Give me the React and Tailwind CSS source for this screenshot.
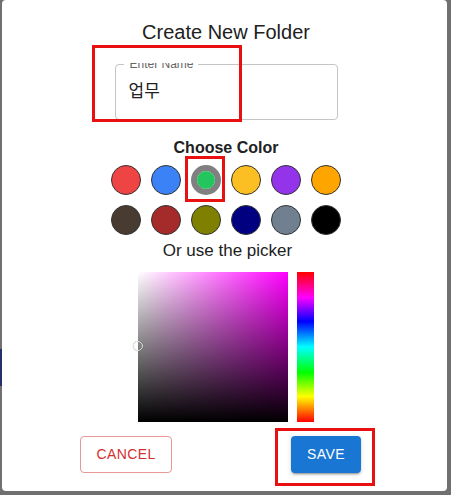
// App.jsx — "Create New Folder" dialog with colour swatches and picker

import React from 'react';

const SWATCHES = [
  '#ef4444', '#3b82f6', '#22c55e', '#fbbf24', '#9333ea', '#ffa500',
  '#483c32', '#a52a2a', '#808000', '#000080', '#708090', '#000000',
];

const SELECTED = 2;

function Swatch({ color, selected }) {
  if (selected) {
    return (
      <div className="w-[30px] h-[30px] rounded-full border-[6px] border-[#808080] flex items-center justify-center">
        <div className="w-full h-full rounded-full" style={{ backgroundColor: color }} />
      </div>
    );
  }
  return (
    <div
      className="w-[30px] h-[30px] rounded-full border border-[#333]"
      style={{ backgroundColor: color }}
    />
  );
}

export default function App() {
  return (
    <div className="w-[451px] h-[495px] bg-[#707070] pl-[2px] pr-[4px] pb-[4px] relative overflow-hidden font-['Liberation_Sans','Noto_Sans_CJK_KR',sans-serif]">
      {/* 背景の青い帯（左端） */}
      <div className="absolute left-0 top-[349px] w-[2px] h-[37px] bg-[#25306b]" />

      <div className="relative h-full bg-white rounded-[4px] flex flex-col">
        {/* タイトル */}
        <div className="mt-[18px] h-[28px] leading-[28px] text-[20px] text-[#212121] text-center pl-[3px]">
          Create New Folder
        </div>

        {/* 内容（上端で label が切れる） */}
        <div className="mt-[17px] flex-1 overflow-hidden pl-[24px] pr-[21px] flex flex-col items-center">
          <div className="relative mt-[1px] w-[223px] h-[56px] shrink-0 border border-[#c4c4c4] rounded-[4px] flex items-center px-[13px]">
            <span className="absolute -top-[7px] left-[8px] pl-[6px] pr-[4px] bg-white text-[12px] leading-[12px] text-[#666]">
              Enter Name
            </span>
            <span className="text-[17px] text-[#212121]">업무</span>
          </div>

          <div className="mt-[16px] h-[24px] leading-[24px] text-[16px] font-bold text-[#212121]">
            Choose Color
          </div>

          <div className="mt-[5px] grid grid-cols-6 gap-[10px]">
            {SWATCHES.map((c, i) => (
              <Swatch key={c} color={c} selected={i === SELECTED} />
            ))}
          </div>

          <div className="mt-[4px] h-[24px] leading-[24px] text-[17px] text-[#212121] pl-[3px]">
            Or use the picker
          </div>

          {/* カラーピッカー */}
          <div className="mt-[9px] flex gap-[9px]">
            <div className="relative w-[150px] h-[150px] bg-[#ff00ff]">
              <div className="absolute inset-0 bg-[linear-gradient(to_right,#fff,rgba(255,255,255,0))]" />
              <div className="absolute inset-0 bg-[linear-gradient(to_top,#000,rgba(0,0,0,0))]" />
              <div className="absolute -left-[5px] top-[69px] w-[10px] h-[10px] rounded-full border border-[#ddd] shadow-[0_0_1px_rgba(0,0,0,0.4)]" />
            </div>
            <div className="w-[17px] h-[150px] bg-[linear-gradient(to_bottom,#f00_0%,#f0f_17%,#00f_33%,#0ff_50%,#0f0_67%,#ff0_83%,#f00_100%)]" />
          </div>

          {/* ボタン */}
          <div className="mt-[14px] self-start ml-[54px] w-[281px] flex justify-between">
            <button className="w-[92px] h-[37px] rounded-[4px] border border-[#e99797] text-[#d32f2f] text-[14px] tracking-[0.4px]">
              CANCEL
            </button>
            <button className="w-[70px] h-[37px] rounded-[4px] bg-[#1976d2] text-white text-[14px] tracking-[0.4px] shadow-[0_3px_1px_-2px_rgba(0,0,0,0.2),0_2px_2px_0_rgba(0,0,0,0.14),0_1px_5px_0_rgba(0,0,0,0.12)]">
              SAVE
            </button>
          </div>
        </div>
      </div>

      {/* 赤い注釈枠 */}
      <div className="absolute left-[92px] top-[45px] w-[150px] h-[77px] border-[3px] border-[#e81010]" />
      <div className="absolute left-[185px] top-[156px] w-[40px] h-[46px] border-[3px] border-[#e81010]" />
      <div className="absolute left-[275px] top-[428px] w-[100px] h-[58px] border-[3px] border-[#e81010]" />
    </div>
  );
}
